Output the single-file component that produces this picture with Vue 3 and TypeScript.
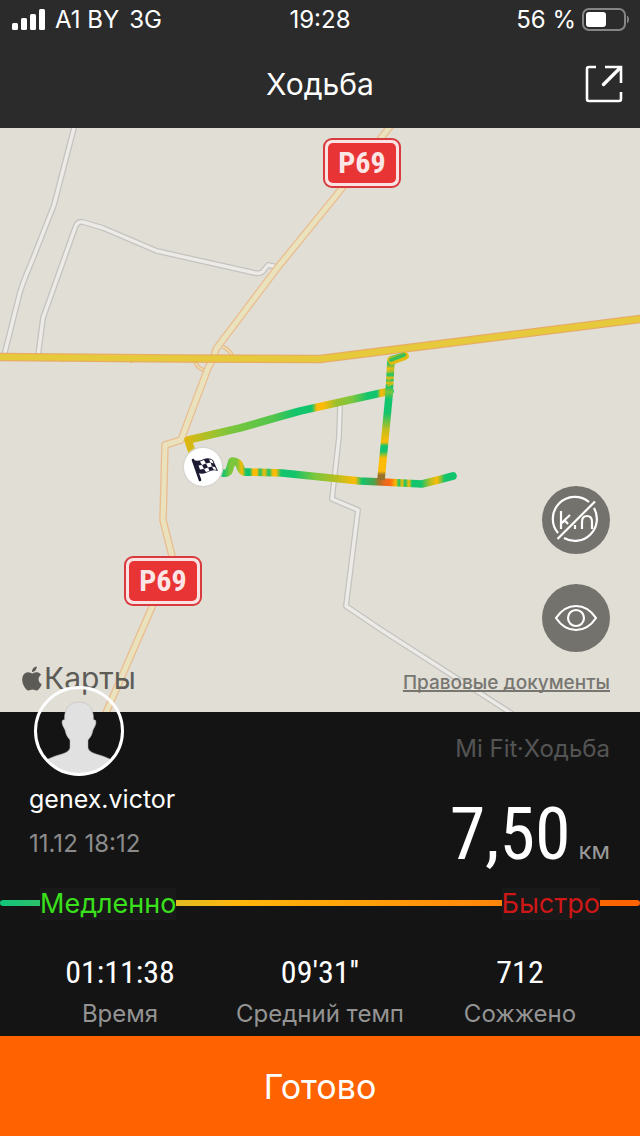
<script setup lang="ts">
interface Stat {
  value: string
  label: string
}

interface Shield {
  x: number
  y: number
  name: string
}

interface Stop {
  at: number
  color: string
}

const stats: Stat[] = [
  { value: '01:11:38', label: 'Время' },
  { value: "09'31''", label: 'Средний темп' },
  { value: '712', label: 'Сожжено' },
]

const shields: Shield[] = [
  { x: 323, y: 10, name: 'P69' },
  { x: 124, y: 428, name: 'P69' },
]

const minorRoads: string[] = [
  'M75 -4L54 77L32 133Q21 158 18 172L4 228',
  'M38 228L43 190L75 100Q77 93 83 94L103 100L157 123L255 145Q262 146 264 142L268 137L277 139',
  'M340 278L339 309L332 371L358 382L346 478L380 501L514 587',
]

const mainRoads: string[] = [
  'M392 -4L335 69L278 139L216 221L214 229L208 240L181 312L165 317L163 392L172 428L152 479L105 587',
]

const ramps: string[] = ['M223 219Q229 221 233 229', 'M195 234Q199 243 208 242']

const G = '#12c46c'
const L = '#7cc63c'
const Y = '#fdbb05'

const lowerStops: Stop[] = [
  { at: 223, color: G }, { at: 230, color: L }, { at: 237, color: L }, { at: 242, color: Y },
  { at: 246, color: G }, { at: 250, color: G }, { at: 253, color: Y }, { at: 257, color: Y },
  { at: 260, color: G }, { at: 264, color: Y }, { at: 269, color: G }, { at: 273, color: Y },
  { at: 276, color: Y }, { at: 281, color: G }, { at: 294, color: G }, { at: 315, color: L },
  { at: 335, color: '#b3bf23' }, { at: 355, color: Y }, { at: 362, color: G }, { at: 374, color: '#4aa34d' },
  { at: 379, color: '#a87424' }, { at: 384, color: '#e26c1d' }, { at: 390, color: '#ff6813' }, { at: 396, color: Y },
  { at: 399, color: G }, { at: 402, color: Y }, { at: 405, color: G }, { at: 409, color: Y },
  { at: 412, color: G }, { at: 421, color: G }, { at: 430, color: '#b3bf23' }, { at: 437, color: Y },
  { at: 445, color: G }, { at: 455, color: G },
]

const verticalStops: Stop[] = [
  { at: 226, color: G }, { at: 231, color: Y }, { at: 235, color: G }, { at: 241, color: Y },
  { at: 247, color: G }, { at: 250, color: Y }, { at: 252, color: G }, { at: 255, color: Y },
  { at: 258, color: G }, { at: 264, color: L }, { at: 271, color: G }, { at: 285, color: G },
  { at: 302, color: '#c5be1d' }, { at: 314, color: Y }, { at: 318, color: G }, { at: 323, color: G },
  { at: 330, color: Y }, { at: 343, color: Y }, { at: 347, color: '#98712b' }, { at: 354, color: '#98712b' },
]

const upperStops: Stop[] = [
  { at: 188, color: '#dcb711' }, { at: 205, color: '#b1bf25' }, { at: 230, color: L }, { at: 275, color: '#50c44d' },
  { at: 295, color: G }, { at: 312, color: G }, { at: 317, color: Y }, { at: 323, color: Y },
  { at: 336, color: '#9dc02e' }, { at: 352, color: L }, { at: 368, color: G }, { at: 377, color: G },
  { at: 381, color: Y }, { at: 387, color: '#a7bd2c' }, { at: 392, color: G },
]

const offset = (stop: Stop, from: number, to: number): number => (stop.at - from) / (to - from)
</script>

<template>
  <div class="screen">
    <div class="status">
      <div class="carrier">
        <svg class="signal" viewBox="0 0 33 22" aria-hidden="true">
          <rect x="0" y="14" width="6" height="7" rx="1.5" />
          <rect x="9" y="9" width="6" height="12" rx="1.5" />
          <rect x="18" y="5" width="6" height="16" rx="1.5" />
          <rect x="27" y="0" width="6" height="21" rx="1.5" />
        </svg>
        <span>A1 BY</span>
        <span>3G</span>
      </div>
      <span>19:28</span>
      <div class="power">
        <span>56 %</span>
        <svg class="battery" viewBox="0 0 48 24" aria-hidden="true">
          <rect x="1" y="1" width="42" height="21" rx="6" fill="none" stroke="#858585" stroke-width="2" />
          <rect x="4" y="4" width="20" height="15" rx="3" fill="#fff" />
          <path d="M45.500 8Q47.500 11.500 45.500 15Z" fill="#858585" stroke="#858585" />
        </svg>
      </div>
    </div>

    <header class="header">
      <h1>Ходьба</h1>
      <button class="share" type="button" aria-label="Поделиться">
        <svg viewBox="0 0 38 38" aria-hidden="true">
          <path d="M11 2H4Q2 2 2 4V34Q2 36 4 36H34Q36 36 36 34V27M20 2H36V18" fill="none" stroke="#fff" stroke-width="2.600" />
          <path d="M18.500 19.500L35 3" fill="none" stroke="#fff" stroke-width="3.400" stroke-linecap="round" />
        </svg>
      </button>
    </header>

    <main class="map">
      <svg class="canvas" viewBox="0 0 640 584" preserveAspectRatio="xMidYMid slice" role="img" aria-label="Маршрут">
        <defs>
          <linearGradient id="lower" gradientUnits="userSpaceOnUse" x1="223" y1="0" x2="455" y2="0">
            <stop v-for="s in lowerStops" :key="s.at" :offset="offset(s, 223, 455)" :stop-color="s.color" />
          </linearGradient>
          <linearGradient id="vertical" gradientUnits="userSpaceOnUse" x1="0" y1="226" x2="0" y2="354">
            <stop v-for="s in verticalStops" :key="s.at" :offset="offset(s, 226, 354)" :stop-color="s.color" />
          </linearGradient>
          <linearGradient id="upper" gradientUnits="userSpaceOnUse" x1="188" y1="0" x2="392" y2="0">
            <stop v-for="s in upperStops" :key="s.at" :offset="offset(s, 188, 392)" :stop-color="s.color" />
          </linearGradient>
        </defs>
        <g fill="none" stroke-linejoin="round">
          <g v-for="d in minorRoads" :key="d">
            <path :d="d" stroke="#c5c3bf" stroke-width="6" />
            <path :d="d" stroke="#edebe7" stroke-width="3.400" />
          </g>
          <g v-for="d in ramps" :key="d">
            <path :d="d" stroke="#e9bb84" stroke-width="4" />
            <path :d="d" stroke="#ebdfb8" stroke-width="1.600" />
          </g>
          <g v-for="d in mainRoads" :key="d">
            <path :d="d" stroke="#e9bd91" stroke-width="7.600" />
            <path :d="d" stroke="#e9e2bd" stroke-width="5" />
          </g>
          <circle cx="62" cy="232" r="2" fill="#e9c064" />
          <circle cx="131" cy="233" r="2" fill="#e9c064" />
          <path d="M-4 229L180 230.500L320 231L480 211L644 190.500" stroke="#e8ad62" stroke-width="8.600" />
          <path d="M-4 229L180 230.500L320 231L480 211L644 190.500" stroke="#e6ca3b" stroke-width="6" />
        </g>
        <g fill="none" stroke-width="7.600" stroke-linecap="round" stroke-linejoin="round">
          <path d="M453 348L438 352L422 356L382 354L360 353L282 345L248 344Q243 345 241 341L239 336Q236 333 232 333L229 343Q227 346 223 345" stroke="url(#lower)" />
          <path d="M192 324L188 312L240 300L282 288L300 283L390 263" stroke="url(#upper)" />
          <path d="M381 352L389 268L391 232L405 228" stroke="url(#vertical)" stroke-linecap="butt" />
          <path d="M392 233L405 228" stroke="#e6bb10" />
          <path d="M391 232L404 227" stroke="#3bbf57" stroke-width="4" />
          <path d="M388 252L392 250M388 258L392 256M388 244L393 241" stroke="#bcbd25" stroke-width="1.500" />
        </g>
        <circle cx="203" cy="339" r="20.500" fill="#d8d6d0" />
        <circle cx="203" cy="339" r="19" fill="#fff" />
        <path d="M193 332L200 352" stroke="#1c1932" stroke-width="2.600" stroke-linecap="round" />
        <path d="M193 332Q199 334 204 331Q209 329 213 332L218 343Q213 341 208 344Q203 347 198 345Z" fill="#1c1932" />
        <path d="M200 333.500L204 332L206 335.500L202 337ZM209 331.500L212 332L213.500 335.500L210.500 334.500ZM206 335.500L210.500 334.500L212 338.500L208 339.500ZM198.500 337.500L202 337L204 341L200 341.500ZM204 341L208 339.500L209.500 343L206 344ZM212 338.500L215 339L216.500 342L213.500 341.500Z" fill="#fff" />
        <g v-for="s in shields" :key="s.x">
          <rect :x="s.x" :y="s.y" width="78" height="50" rx="9" fill="#d93a3d" />
          <rect :x="s.x + 2" :y="s.y + 2" width="74" height="46" rx="7" fill="#f9e2e1" />
          <rect :x="s.x + 5" :y="s.y + 5" width="68" height="40" rx="5" fill="#e83435" />
          <text class="road" :x="s.x + 39" :y="s.y + 35" text-anchor="middle">{{ s.name }}</text>
        </g>
      </svg>

      <div class="brand">
        <svg viewBox="0 0 24 24" aria-hidden="true">
          <path d="M12.152 6.896c-.948 0-2.415-1.078-3.960-1.040-2.040.027-3.910 1.183-4.961 3.014-2.117 3.675-.546 9.103 1.519 12.090 1.013 1.454 2.208 3.090 3.792 3.039 1.520-.065 2.090-.987 3.935-.987 1.831 0 2.350.987 3.960.948 1.637-.026 2.676-1.480 3.676-2.948 1.156-1.688 1.636-3.325 1.662-3.415-.039-.013-3.182-1.221-3.220-4.857-.026-3.040 2.480-4.494 2.597-4.559-1.429-2.090-3.623-2.324-4.390-2.376-2-.156-3.675 1.090-4.610 1.090zM15.530 3.830c.843-1.012 1.400-2.427 1.245-3.830-1.207.052-2.662.805-3.532 1.818-.780.896-1.454 2.338-1.273 3.714 1.338.104 2.715-.688 3.560-1.702z" />
        </svg>
        <span>Карты</span>
      </div>

      <div class="tools">
        <button class="tool" type="button" aria-label="Скрыть километры">
          <svg viewBox="0 0 68 68" fill="none" stroke="#fff" stroke-width="2.200" aria-hidden="true">
            <path d="M47 16A22 22 0 0 0 16 47M22 52A22 22 0 0 0 52 22" />
            <path d="M15.500 53L53 15.500" />
            <path d="M19 25V43M28 29L19.500 37L23 34.500L26 38M33 39V43M40 43V36Q40 30 45 30Q50 30 50 36V43" />
          </svg>
        </button>
        <button class="tool" type="button" aria-label="Показать карту">
          <svg viewBox="0 0 68 68" fill="none" stroke="#fff" stroke-width="2.200" aria-hidden="true">
            <path d="M14 34Q22 22 34 22Q46 22 54 34Q46 46 34 46Q22 46 14 34Z" />
            <circle cx="34" cy="34" r="8" />
          </svg>
        </button>
        <a class="legal" href="#legal">Правовые документы</a>
      </div>
    </main>

    <section class="summary">
      <div class="overview">
        <div class="person">
          <svg class="avatar" viewBox="0 0 90 90" aria-hidden="true">
            <clipPath id="round"><circle cx="45" cy="45" r="43" /></clipPath>
            <path clip-path="url(#round)" d="M45 16C55 16 60 23 59.500 34Q63 33 61.500 39L59 44Q58 50 54 54V62Q55 66 62 68Q77 72 83 78V90H7V78Q13 72 28 68Q35 66 36 62V54Q32 50 31 44L28.500 39Q27 33 30.500 34C30 23 35 16 45 16Z" fill="#e1e1e1" stroke="#b5b5b5" stroke-width="0.500" />
            <circle cx="45" cy="45" r="43.500" fill="none" stroke="#fff" stroke-width="3" />
          </svg>
          <p class="name">genex.victor</p>
          <p class="date">11.12 18:12</p>
        </div>
        <div class="result">
          <p class="source">Mi Fit·Ходьба</p>
          <p class="distance"><span class="amount">7,50</span><span class="unit">км</span></p>
        </div>
      </div>

      <div class="pace">
        <span class="tag slow">Медленно</span>
        <span class="tag fast">Быстро</span>
      </div>

      <dl class="stats">
        <div v-for="s in stats" :key="s.label" class="stat">
          <dt>{{ s.label }}</dt>
          <dd>{{ s.value }}</dd>
        </div>
      </dl>
    </section>

    <button class="done" type="button">Готово</button>
  </div>
</template>

<style>
body {
  margin: 0;
  background: #141414;
}
</style>

<style scoped>
.screen {
  display: flex;
  flex-direction: column;
  min-height: 100vh;
  color: #fff;
  font-family: Inter, "Noto Sans", sans-serif;
  font-size: 24px;
}
h1, p, dl, dd {
  margin: 0;
}
button {
  border: 0;
  padding: 0;
  color: inherit;
  font-family: inherit;
  cursor: pointer;
}
svg {
  display: block;
}
.status {
  display: grid;
  grid-template-columns: 1fr auto 1fr;
  align-items: center;
  height: 40px;
  padding: 0 10px;
  background: #2b2b2b;
  line-height: 40px;
}
.carrier, .power {
  display: flex;
  align-items: center;
  gap: 10px;
}
.power {
  justify-content: flex-end;
  gap: 6px;
}
.signal {
  width: 33px;
  height: 22px;
  margin-left: 2px;
  fill: #fff;
}
.battery {
  width: 48px;
  height: 24px;
}
.header {
  display: grid;
  grid-template-columns: 1fr auto 1fr;
  align-items: center;
  height: 88px;
  padding: 0 17px;
  background: #2b2b2b;
}
h1 {
  grid-column: 2;
  font-size: 30px;
  font-weight: 400;
  line-height: 40px;
}
.share {
  justify-self: end;
  background: none;
}
.share svg {
  width: 38px;
  height: 38px;
}
.map {
  position: relative;
  flex: 1;
  min-height: 400px;
  overflow: hidden;
  background: #e1ded6;
}
.canvas {
  position: absolute;
  inset: 0;
  width: 100%;
  height: 100%;
}
.road {
  fill: #fce6e5;
  font-family: "Roboto Condensed", Roboto, sans-serif;
  font-size: 30px;
  font-weight: 700;
}
.brand {
  position: absolute;
  left: 20px;
  bottom: 14px;
  display: flex;
  align-items: center;
  color: #5d5b56;
  font-size: 30px;
  line-height: 40px;
}
.brand svg {
  width: 24px;
  height: 25px;
  fill: #5d5b56;
}
.tools {
  position: absolute;
  right: 30px;
  bottom: 16px;
  display: flex;
  flex-direction: column;
  align-items: flex-end;
  gap: 30px;
}
.tool {
  width: 68px;
  height: 68px;
  border-radius: 50%;
  background: #73726d;
}
.legal {
  margin-top: -12px;
  color: #777671;
  font-size: 19px;
  font-weight: 500;
  line-height: 26px;
  text-decoration-thickness: 2px;
  text-decoration-skip-ink: none;
}
.summary {
  background: #141414;
}
.overview {
  display: flex;
  justify-content: space-between;
  height: 176px;
  padding: 0 30px 0 29px;
}
.person {
  position: relative;
  margin-top: -26px;
}
.avatar {
  width: 90px;
  height: 90px;
  margin-left: 5px;
}
.name {
  margin-top: 8px;
  font-size: 25px;
  line-height: 30px;
}
.date {
  margin-top: 15px;
  color: #8b8b8b;
  line-height: 30px;
}
.result {
  padding-top: 22px;
  text-align: right;
}
.source {
  color: #545454;
  line-height: 30px;
}
.distance {
  display: flex;
  align-items: baseline;
  justify-content: flex-end;
  gap: 8px;
  padding-top: 16px;
  line-height: 110px;
}
.amount {
  font-family: "Roboto Condensed", Roboto, sans-serif;
  font-size: 72px;
}
.unit {
  color: #999;
}
.pace {
  position: relative;
  display: flex;
  justify-content: space-between;
  padding: 0 40px;
}
.pace::before {
  content: "";
  position: absolute;
  top: 12px;
  right: 0;
  left: 0;
  height: 6px;
  border-radius: 3px;
  background: linear-gradient(90deg, #10c47a 0%, #30c06a 7%, #e2bd1f 28%, #ffb50b 38%, #ffa209 55%, #ff850a 78%, #ff6302 96%);
}
.tag {
  position: relative;
  background: #181918;
  font-size: 27px;
  line-height: 32px;
}
.slow {
  color: #3ae01c;
}
.fast {
  color: #cf1717;
}
.stats {
  display: grid;
  grid-template-columns: repeat(3, 1fr);
  padding: 32px 20px 6px;
}
.stat {
  display: flex;
  flex-direction: column-reverse;
  align-items: center;
}
dt {
  color: #939393;
  line-height: 32px;
}
dd {
  margin-bottom: 6px;
  font-family: "Roboto Condensed", Roboto, sans-serif;
  font-size: 32px;
  line-height: 40px;
}
.done {
  height: 100px;
  background: #ff6200;
  font-size: 34px;
  font-weight: 400;
}
</style>
